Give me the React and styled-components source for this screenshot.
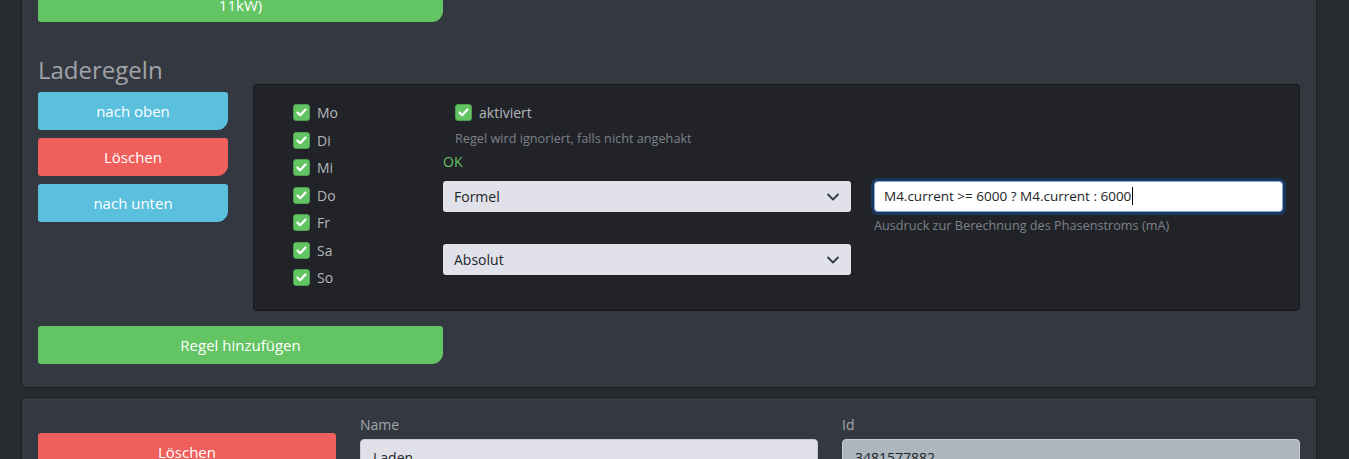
import styled, { createGlobalStyle } from 'styled-components'

const GlobalStyle = createGlobalStyle`
  html, body {
    margin: 0;
    padding: 0;
    background: #272a2f;
    overflow: hidden;
  }
  body {
    font-family: "Open Sans", Lato, sans-serif;
    font-size: 14px;
    color: #b3b6bb;
  }
`;

const days = ['Mo', 'Di', 'Mi', 'Do', 'Fr', 'Sa', 'So'];

const Check = () => (
  <CheckBox>
    <svg width="11" height="9" viewBox="0 0 11 9">
      <path d="M1.5 4.6 L4.2 7.2 L9.5 1.6" fill="none" stroke="#fff" strokeWidth="2.2" strokeLinecap="round" strokeLinejoin="round" />
    </svg>
  </CheckBox>
);

const Select = ({ value }) => (
  <SelectWrap>
    <SelectBox value={value} onChange={() => {}}>
      <option>{value}</option>
    </SelectBox>
    <Chevron width="14" height="10" viewBox="0 0 14 10">
      <path d="M2 2.5 L7 7.5 L12 2.5" fill="none" stroke="#343a40" strokeWidth="1.8" strokeLinecap="round" strokeLinejoin="round" />
    </Chevron>
  </SelectWrap>
);

const App = () => {
  return (
    <>
      <GlobalStyle />
      <Page>
        <Card>
          <Button color="#62c462" width="405px" twoLine>
            Laden mit maximaler Leistung (16A, 3 Phasen,
            <br />
            11kW)
          </Button>
          <Heading>Laderegeln</Heading>
          <RuleRow>
            <ButtonColumn>
              <Button color="#5bc0de">nach oben</Button>
              <Button color="#ef5f5c">Löschen</Button>
              <Button color="#5bc0de">nach unten</Button>
            </ButtonColumn>
            <Panel>
              <DayList>
                {days.map((d) => (
                  <CheckRow key={d}>
                    <Check />
                    <CheckLabel>{d}</CheckLabel>
                  </CheckRow>
                ))}
              </DayList>
              <RuleBody>
                <Indented>
                  <CheckRow>
                    <Check />
                    <CheckLabel>aktiviert</CheckLabel>
                  </CheckRow>
                  <Hint>Regel wird ignoriert, falls nicht angehakt</Hint>
                </Indented>
                <Status>OK</Status>
                <FieldGrid>
                  <Select value="Formel" />
                  <div>
                    <FormulaInput>
                      M4.current &gt;= 6000 ? M4.current : 6000<Caret />
                    </FormulaInput>
                    <Hint gap="4px">Ausdruck zur Berechnung des Phasenstroms (mA)</Hint>
                  </div>
                  <ModeRow>
                    <Select value="Absolut" />
                  </ModeRow>
                </FieldGrid>
              </RuleBody>
            </Panel>
          </RuleRow>
          <AddRow>
            <Button color="#62c462" width="405px">Regel hinzufügen</Button>
          </AddRow>
        </Card>
        <Card>
          <DeviceGrid>
            <DeleteSlot>
              <Button color="#ef5f5c">Löschen</Button>
            </DeleteSlot>
            <Field>
              <FieldLabel>Name</FieldLabel>
              <TextBox>Laden</TextBox>
            </Field>
            <Field>
              <FieldLabel>Id</FieldLabel>
              <TextBox disabled>3481577882</TextBox>
            </Field>
          </DeviceGrid>
        </Card>
      </Page>
    </>
  );
};

export default App;

const Page = styled.div`
  margin-top: -53px;
  padding-left: 21px;
  width: 1296px;
  display: flex;
  flex-direction: column;
  gap: 9px;
`;

const Card = styled.div`
  background: #343841;
  border: 1px solid #1c1e22;
  border-radius: 4px;
  padding: 16px 16px 23px 16px;
`;

const Button = styled.div`
  box-sizing: border-box;
  width: ${({ width }) => width || 'auto'};
  background: ${({ color }) => color};
  color: #fff;
  text-align: center;
  font-size: 15px;
  line-height: 22px;
  padding: ${({ twoLine }) => (twoLine ? '8px 12px 6px' : '8px 12px')};
  border-radius: 3px 3px 11px 3px;
  cursor: pointer;
`;

const Heading = styled.h4`
  margin: 35px 0 1px;
  font-size: 24px;
  line-height: 26px;
  font-weight: 500;
  color: #a0a3a8;
`;

const RuleRow = styled.div`
  display: grid;
  grid-template-columns: 190px 1fr;
  gap: 25px;
  align-items: start;
`;

const ButtonColumn = styled.div`
  display: flex;
  flex-direction: column;
  gap: 8px;
  padding-top: 8px;
`;

const Panel = styled.div`
  display: grid;
  grid-template-columns: 150px 1fr;
  background: #212328;
  border: 1px solid #141619;
  border-radius: 4px;
  padding: 14px 16px 18px 39px;
`;

const DayList = styled.div`
  display: flex;
  flex-direction: column;
`;

const CheckRow = styled.div`
  display: flex;
  align-items: center;
  gap: 7px;
  height: 27.5px;
`;

const CheckBox = styled.span`
  box-sizing: border-box;
  width: 17px;
  height: 17px;
  border-radius: 3px;
  background: #62c462;
  border: 1px solid #4f9e4f;
  display: inline-flex;
  align-items: center;
  justify-content: center;
  flex-shrink: 0;
`;

const CheckLabel = styled.span`
  font-size: 14px;
  color: #b3b6bb;
`;

const RuleBody = styled.div`
  display: flex;
  flex-direction: column;
`;

const Indented = styled.div`
  padding-left: 12px;
`;

const Hint = styled.div`
  font-size: 12.7px;
  line-height: 18px;
  color: #7d8189;
  margin-top: ${({ gap }) => gap || '2px'};
  white-space: nowrap;
`;

const Status = styled.div`
  font-size: 14px;
  line-height: 21px;
  color: #62c462;
  margin-top: 4px;
`;

const FieldGrid = styled.div`
  display: grid;
  grid-template-columns: 408px 1fr;
  column-gap: 23px;
  margin-top: 9px;
`;

const ModeRow = styled.div`
  grid-column: 1;
  margin-top: 10px;
`;

const SelectWrap = styled.div`
  position: relative;
`;

const SelectBox = styled.select`
  appearance: none;
  width: 100%;
  height: 31px;
  box-sizing: border-box;
  border: none;
  border-radius: 3px;
  background: #e0e1e9;
  color: #212529;
  font-family: "Open Sans", Lato, sans-serif;
  font-size: 14px;
  padding: 0 36px 0 11px;
  outline: none;
`;

const Chevron = styled.svg`
  position: absolute;
  right: 11px;
  top: 11px;
  pointer-events: none;
`;

const FormulaInput = styled.div`
  box-sizing: border-box;
  height: 31px;
  display: flex;
  align-items: center;
  background: #fff;
  color: #212529;
  font-size: 13.5px;
  padding: 0 9px;
  border: 1px solid #86a9dc;
  border-radius: 4px;
  box-shadow: 0 0 0 3px #1c375e;
  white-space: pre;
`;

const Caret = styled.span`
  display: inline-block;
  width: 1px;
  height: 18px;
  background: #000;
  margin-left: 1px;
`;

const AddRow = styled.div`
  margin-top: 15px;
`;

const DeviceGrid = styled.div`
  display: grid;
  grid-template-columns: 298px 1fr 1fr;
  gap: 24px;
  align-items: start;
`;

const DeleteSlot = styled.div`
  padding-top: 19px;
`;

const Field = styled.div`
  display: flex;
  flex-direction: column;
`;

const FieldLabel = styled.label`
  font-size: 14px;
  line-height: 22px;
  color: #a3a6ab;
  margin-bottom: 3px;
`;

const TextBox = styled.div`
  box-sizing: border-box;
  height: 38px;
  padding: 0 12px;
  display: flex;
  align-items: center;
  border-radius: 4px;
  border: 1px solid #c7cad1;
  background: ${({ disabled }) => (disabled ? '#adb5bd' : '#dfe0e8')};
  color: #212529;
  font-size: 14px;
`;
